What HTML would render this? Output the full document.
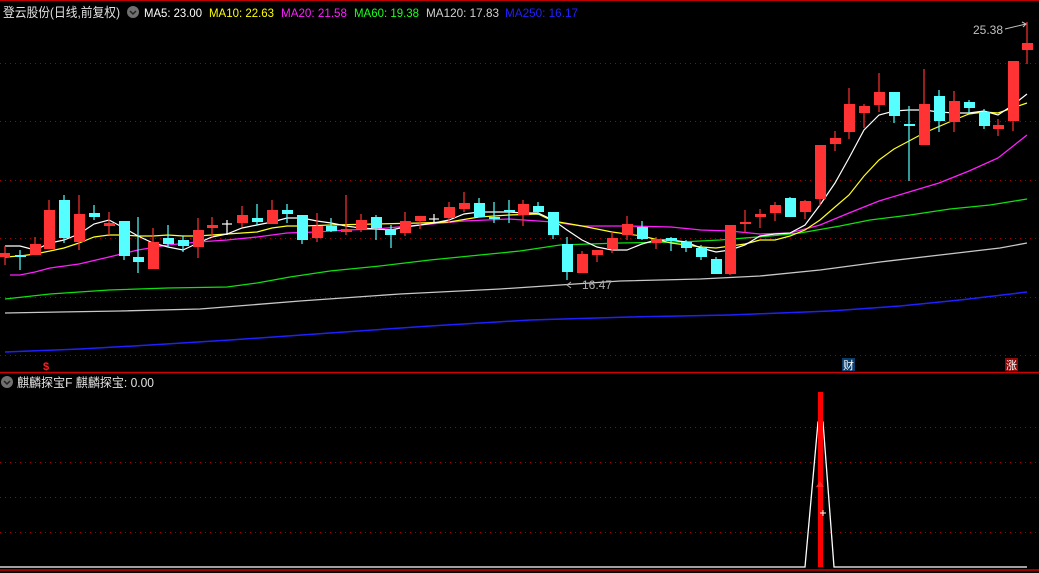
<!DOCTYPE html>
<html><head><meta charset="utf-8"><style>
html,body{margin:0;padding:0;background:#000;width:1039px;height:573px;overflow:hidden}
svg{display:block}
text{font-family:"Liberation Sans","Noto Sans CJK SC",sans-serif;font-size:12px}
</style></head><body>
<svg width="1039" height="573" viewBox="0 0 1039 573" xmlns="http://www.w3.org/2000/svg">
<rect width="1039" height="573" fill="#000"/>
<line x1="0" y1="0.5" x2="1039" y2="0.5" stroke="#c00000"/>
<g stroke="#a00000" stroke-dasharray="1,4" stroke-width="1">
<line x1="0" y1="63.5" x2="1039" y2="63.5"/>
<line x1="0" y1="121.5" x2="1039" y2="121.5"/>
<line x1="0" y1="180.5" x2="1039" y2="180.5"/>
<line x1="0" y1="238.5" x2="1039" y2="238.5"/>
<line x1="0" y1="297.5" x2="1039" y2="297.5"/>
<line x1="0" y1="355.5" x2="1039" y2="355.5"/>
<line x1="0" y1="427.5" x2="1039" y2="427.5"/>
<line x1="0" y1="462.5" x2="1039" y2="462.5"/>
<line x1="0" y1="497.5" x2="1039" y2="497.5"/>
<line x1="0" y1="532.5" x2="1039" y2="532.5"/>
</g>
<line x1="0" y1="372.5" x2="1039" y2="372.5" stroke="#d00000" stroke-width="1.5"/>
<line x1="0" y1="570" x2="1039" y2="570" stroke="#d00000" stroke-width="1.5"/>

<g fill="none" stroke-width="1">
<polyline stroke="#2020ff" stroke-width="1.5" points="5,352 80,349 150,345 230,340 330,333 430,326 530,320 630,317 730,315 830,311 900,306 960,300 1027,292"/>
<polyline stroke="#c8c8c8" stroke-width="1.3" points="5,313 60,312 120,311 200,309 300,301 400,294 500,289 560,285 620,281 700,279 760,276 820,270 880,262 940,255 1000,248 1027,243"/>
<polyline stroke="#10e010" stroke-width="1.3" points="5,299 50,294 109,290 168,288 227,287 257,283 290,277 330,271 380,266 430,260 470,256 520,251 560,245 620,243 680,242 720,240 770,236 800,233 840,226 870,220 910,215 950,209 990,205 1027,199"/>
<polyline stroke="#ff20ff" stroke-width="1.3" points="10,275 20,275 35,272 50,268 79,264 109,257 138,250 168,245 198,242 227,240 257,237 287,233 317,232 346,230 376,229 420,225 464,221 509,219 553,222 582,226 627,226 671,227 701,230 730,231 760,234 790,233 820,225 849,213 879,201 909,192 939,183 969,171 998,158 1027,135"/>
<polyline stroke="#ffff20" stroke-width="1.2" points="5,257 20,256 35,254 50,251 64,248 79,243 94,237 109,235 124,235 138,236 153,236 168,235 183,236 198,236 212,235 227,234 242,233 257,232 272,228 287,226 302,226 331,225 376,224 420,223 449,222 479,217 509,215 538,214 553,221 582,226 612,232 642,236 671,243 701,247 716,248 745,244 760,240 775,240 790,236 805,230 820,220 835,207 849,195 864,176 879,160 894,149 924,133 954,120 969,114 984,112 998,113 1027,103"/>
<polyline stroke="#ffffff" stroke-width="1.2" points="5,246 20,246 35,250 50,243 64,240 79,234 94,224 109,220 124,228 138,236 153,243 168,247 183,250 198,243 212,237 227,234 242,228 257,225 272,222 287,218 302,218 317,221 331,223 346,226 361,228 376,229 391,230 405,227 420,225 434,223 449,220 464,214 479,212 494,212 509,212 523,213 538,213 553,220 567,230 582,240 597,247 612,250 627,250 642,244 656,240 671,240 686,242 701,248 716,252 730,250 745,245 760,236 775,234 790,233 805,225 820,205 835,183 849,158 864,130 879,115 894,111 909,110 924,110 939,112 954,113 969,113 984,111 998,115 1013,105 1027,94"/>
</g>

<g stroke="#ff3333" stroke-width="1.2">
<line x1="5" y1="246" x2="5" y2="265"/><line x1="35" y1="237" x2="35" y2="255"/><line x1="49" y1="200" x2="49" y2="249"/><line x1="79" y1="195" x2="79" y2="250"/><line x1="109" y1="212" x2="109" y2="235"/><line x1="153" y1="228" x2="153" y2="269"/><line x1="198" y1="218" x2="198" y2="258"/><line x1="212" y1="217" x2="212" y2="237"/><line x1="242" y1="206" x2="242" y2="227"/><line x1="272" y1="200" x2="272" y2="224"/><line x1="317" y1="213" x2="317" y2="242"/><line x1="346" y1="195" x2="346" y2="235"/><line x1="361" y1="214" x2="361" y2="232"/><line x1="405" y1="212" x2="405" y2="236"/><line x1="420" y1="216" x2="420" y2="229"/><line x1="449" y1="202" x2="449" y2="223"/><line x1="464" y1="192" x2="464" y2="212"/><line x1="523" y1="200" x2="523" y2="226"/><line x1="582" y1="251" x2="582" y2="273"/><line x1="597" y1="250" x2="597" y2="262"/><line x1="612" y1="232" x2="612" y2="253"/><line x1="627" y1="216" x2="627" y2="240"/><line x1="656" y1="237" x2="656" y2="249"/><line x1="730" y1="225" x2="730" y2="275"/><line x1="745" y1="210" x2="745" y2="233"/><line x1="760" y1="209" x2="760" y2="228"/><line x1="775" y1="202" x2="775" y2="221"/><line x1="805" y1="200" x2="805" y2="219"/><line x1="820" y1="145" x2="820" y2="206"/><line x1="835" y1="131" x2="835" y2="151"/><line x1="849" y1="88" x2="849" y2="139"/><line x1="864" y1="104" x2="864" y2="128"/><line x1="879" y1="73" x2="879" y2="112"/><line x1="924" y1="69" x2="924" y2="145"/><line x1="954" y1="91" x2="954" y2="132"/><line x1="998" y1="119" x2="998" y2="136"/><line x1="1013" y1="61" x2="1013" y2="131"/><line x1="1027" y1="22" x2="1027" y2="64"/>
</g>
<g fill="#ff3333">
<rect x="0" y="253" width="10" height="4"/><rect x="30" y="244" width="11" height="11"/><rect x="44" y="210" width="11" height="39"/><rect x="74" y="214" width="11" height="28"/><rect x="104" y="223" width="11" height="3"/><rect x="148" y="242" width="11" height="27"/><rect x="193" y="230" width="11" height="17"/><rect x="207" y="225" width="11" height="3"/><rect x="237" y="215" width="11" height="8"/><rect x="267" y="210" width="11" height="14"/><rect x="312" y="226" width="11" height="12"/><rect x="341" y="229" width="11" height="3"/><rect x="356" y="220" width="11" height="9"/><rect x="400" y="221" width="11" height="12"/><rect x="415" y="216" width="11" height="5"/><rect x="444" y="207" width="11" height="11"/><rect x="459" y="203" width="11" height="6"/><rect x="518" y="204" width="11" height="11"/><rect x="577" y="254" width="11" height="19"/><rect x="592" y="250" width="11" height="5"/><rect x="607" y="238" width="11" height="11"/><rect x="622" y="224" width="11" height="11"/><rect x="651" y="239" width="11" height="4"/><rect x="725" y="225" width="11" height="49"/><rect x="740" y="222" width="11" height="2"/><rect x="755" y="214" width="11" height="3"/><rect x="770" y="205" width="11" height="8"/><rect x="800" y="201" width="11" height="11"/><rect x="815" y="145" width="11" height="54"/><rect x="830" y="138" width="11" height="6"/><rect x="844" y="104" width="11" height="28"/><rect x="859" y="106" width="11" height="7"/><rect x="874" y="92" width="11" height="13"/><rect x="919" y="104" width="11" height="41"/><rect x="949" y="101" width="11" height="21"/><rect x="993" y="125" width="11" height="4"/><rect x="1008" y="61" width="11" height="60"/><rect x="1022" y="43" width="11" height="7"/>
</g>
<g stroke="#55ffff" stroke-width="1.2">
<line x1="20" y1="250" x2="20" y2="270"/><line x1="64" y1="195" x2="64" y2="243"/><line x1="94" y1="205" x2="94" y2="220"/><line x1="124" y1="221" x2="124" y2="260"/><line x1="138" y1="217" x2="138" y2="273"/><line x1="168" y1="225" x2="168" y2="247"/><line x1="183" y1="236" x2="183" y2="252"/><line x1="257" y1="204" x2="257" y2="225"/><line x1="287" y1="204" x2="287" y2="223"/><line x1="302" y1="215" x2="302" y2="244"/><line x1="331" y1="218" x2="331" y2="232"/><line x1="376" y1="215" x2="376" y2="240"/><line x1="391" y1="225" x2="391" y2="248"/><line x1="479" y1="198" x2="479" y2="217"/><line x1="494" y1="202" x2="494" y2="223"/><line x1="509" y1="200" x2="509" y2="223"/><line x1="538" y1="202" x2="538" y2="215"/><line x1="553" y1="212" x2="553" y2="239"/><line x1="567" y1="237" x2="567" y2="280"/><line x1="642" y1="221" x2="642" y2="240"/><line x1="671" y1="237" x2="671" y2="251"/><line x1="686" y1="240" x2="686" y2="252"/><line x1="701" y1="245" x2="701" y2="260"/><line x1="716" y1="257" x2="716" y2="274"/><line x1="790" y1="197" x2="790" y2="217"/><line x1="894" y1="92" x2="894" y2="123"/><line x1="909" y1="106" x2="909" y2="181"/><line x1="939" y1="90" x2="939" y2="132"/><line x1="969" y1="100" x2="969" y2="114"/><line x1="984" y1="109" x2="984" y2="129"/>
</g>
<g fill="#55ffff">
<rect x="15" y="255" width="11" height="2"/><rect x="59" y="200" width="11" height="38"/><rect x="89" y="213" width="11" height="4"/><rect x="119" y="221" width="11" height="35"/><rect x="133" y="257" width="11" height="5"/><rect x="163" y="238" width="11" height="6"/><rect x="178" y="240" width="11" height="6"/><rect x="252" y="218" width="11" height="4"/><rect x="282" y="210" width="11" height="4"/><rect x="297" y="215" width="11" height="25"/><rect x="326" y="226" width="11" height="5"/><rect x="371" y="217" width="11" height="11"/><rect x="385" y="229" width="11" height="6"/><rect x="474" y="203" width="11" height="14"/><rect x="489" y="217" width="11" height="2"/><rect x="504" y="210" width="11" height="2"/><rect x="533" y="206" width="11" height="6"/><rect x="548" y="212" width="11" height="23"/><rect x="562" y="244" width="11" height="28"/><rect x="637" y="227" width="11" height="12"/><rect x="666" y="238" width="11" height="3"/><rect x="681" y="242" width="11" height="6"/><rect x="696" y="248" width="11" height="9"/><rect x="711" y="259" width="11" height="15"/><rect x="785" y="198" width="11" height="19"/><rect x="889" y="92" width="11" height="24"/><rect x="904" y="124" width="11" height="2"/><rect x="934" y="96" width="11" height="25"/><rect x="964" y="102" width="11" height="6"/><rect x="979" y="112" width="11" height="14"/>
</g>
<g stroke="#fff" stroke-width="1.2">
<line x1="227" y1="220" x2="227" y2="235"/><line x1="222" y1="224" x2="232" y2="224"/>
<line x1="434" y1="214" x2="434" y2="223"/><line x1="429" y1="219" x2="439" y2="219"/>
</g>

<text x="582" y="289" fill="#b0b0b0">16.47</text>
<path d="M571,282 L567,285 L571,288" stroke="#b0b0b0" fill="none"/>
<text x="973" y="34" fill="#c0c0c0">25.38</text>
<path d="M1005,29 L1026,24 M1022,22 L1026,24 L1023,27" stroke="#c0c0c0" fill="none"/>

<text x="43" y="370" fill="#ff2020" font-weight="bold" style="font-size:11px">$</text>
<rect x="842" y="358" width="13" height="13" fill="#0b3d6b"/>
<text x="843" y="369" fill="#fff" style="font-size:11px">财</text>
<rect x="1005" y="358" width="13" height="13" fill="#8b0a0a"/>
<text x="1006" y="369" fill="#fff" style="font-size:11px">涨</text>

<text x="3" y="17" fill="#e0e0e0" style="font-size:13px" textLength="117" lengthAdjust="spacingAndGlyphs">登云股份(日线,前复权)</text>
<circle cx="133" cy="12" r="6" fill="#707070"/>
<path d="M130,11 L133,14 L136,11" stroke="#222" stroke-width="1.5" fill="none"/>
<text x="144" y="17" fill="#ffffff" textLength="58" lengthAdjust="spacingAndGlyphs">MA5: 23.00</text>
<text x="209" y="17" fill="#ffff00" textLength="65" lengthAdjust="spacingAndGlyphs">MA10: 22.63</text>
<text x="281" y="17" fill="#ff20ff" textLength="66" lengthAdjust="spacingAndGlyphs">MA20: 21.58</text>
<text x="354" y="17" fill="#20ff20" textLength="65" lengthAdjust="spacingAndGlyphs">MA60: 19.38</text>
<text x="426" y="17" fill="#d0d0d0" textLength="73" lengthAdjust="spacingAndGlyphs">MA120: 17.83</text>
<text x="505" y="17" fill="#2020ff" textLength="73" lengthAdjust="spacingAndGlyphs">MA250: 16.17</text>

<circle cx="7" cy="382" r="6" fill="#707070"/>
<path d="M4,381 L7,384 L10,381" stroke="#222" stroke-width="1.5" fill="none"/>
<text x="17" y="387" fill="#e0e0e0" style="font-size:12.5px" textLength="137" lengthAdjust="spacingAndGlyphs">麒麟探宝F  麒麟探宝: 0.00</text>

<polyline fill="none" stroke="#fff" stroke-width="1.3" points="0,567 805,567 818,422 823,422 834,567 1027,567"/>
<rect x="818" y="392" width="5" height="175" fill="#ff0000"/>
<path d="M816,487 L820,481 L824,487 Z" fill="#ff2020"/>
<path d="M823,510 L823,516 M820,513 L826,513" stroke="#fff"/>
</svg>
</body></html>
